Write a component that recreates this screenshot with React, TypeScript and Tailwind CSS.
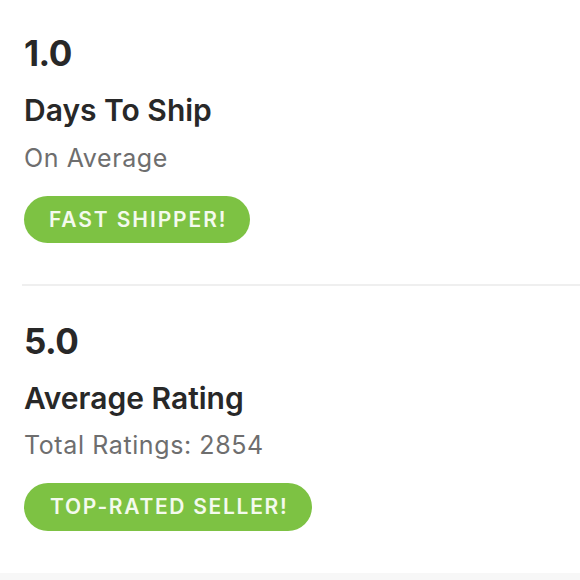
export default function App() {
  const font = { fontFamily: "Inter, 'Open Sans', sans-serif" };
  return (
    <div className="w-[580px] h-[580px] bg-white flex flex-col overflow-hidden" style={font}>
      <div className="pl-[24px] pt-[31px] h-[284px] flex flex-col">
        <div className="text-[35px] leading-[44px] font-bold text-[#282828] tracking-[-0.5px]">1.0</div>
        <div className="mt-[17px] text-[30px] leading-[36px] font-semibold text-[#282828]">Days To Ship</div>
        <div className="mt-[15px] text-[25px] leading-[30px] text-[#6e6e6e] tracking-[0.6px]">On Average</div>
        <div className="mt-[23px] self-start h-[47px] pl-[25px] pr-[23px] rounded-full bg-[#7dc243] flex items-center text-[21px] font-semibold tracking-[1.9px] text-[#f4faee]">FAST SHIPPER!</div>
      </div>
      <div className="ml-[22px] h-[2px] bg-[#efefef]" />
      <div className="pl-[24px] pt-[33px] flex flex-col flex-1">
        <div className="text-[35px] leading-[44px] font-bold text-[#282828] tracking-[-0.5px]">5.0</div>
        <div className="mt-[17px] text-[30px] leading-[36px] font-semibold text-[#282828]">Average Rating</div>
        <div className="mt-[14px] text-[25px] leading-[30px] text-[#6e6e6e] tracking-[0.6px]">Total Ratings: 2854</div>
        <div className="mt-[23px] self-start h-[48px] pl-[26px] pr-[24px] rounded-full bg-[#7dc243] flex items-center text-[21px] font-semibold tracking-[1.7px] text-[#f4faee]">TOP-RATED SELLER!</div>
      </div>
      <div className="h-[7px] bg-[#f7f7f7]" />
    </div>
  );
}
